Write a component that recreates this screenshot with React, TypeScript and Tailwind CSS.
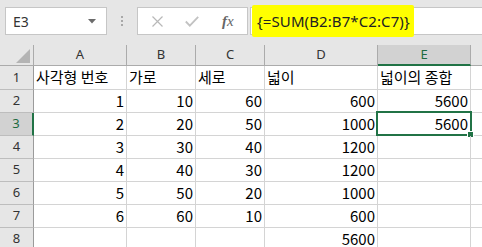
import React from "react";

const colW = ["w-[34px]", "w-[93px]", "w-[69px]", "w-[69px]", "w-[113px]", "w-[93px]"];
const cellFont = { fontFamily: '"Noto Sans CJK KR", "Noto Sans", sans-serif' };
const uiFont = { fontFamily: '"Noto Sans", "Open Sans", sans-serif' };

type Cell = { v: string; left?: boolean };

const data: Cell[][] = [
  [{ v: "사각형 번호", left: true }, { v: "가로", left: true }, { v: "세로", left: true }, { v: "넓이", left: true }, { v: "넓이의 종합", left: true }],
  [{ v: "1" }, { v: "10" }, { v: "60" }, { v: "600" }, { v: "5600" }],
  [{ v: "2" }, { v: "20" }, { v: "50" }, { v: "1000" }, { v: "5600" }],
  [{ v: "3" }, { v: "30" }, { v: "40" }, { v: "1200" }, { v: "" }],
  [{ v: "4" }, { v: "40" }, { v: "30" }, { v: "1200" }, { v: "" }],
  [{ v: "5" }, { v: "50" }, { v: "20" }, { v: "1000" }, { v: "" }],
  [{ v: "6" }, { v: "60" }, { v: "10" }, { v: "600" }, { v: "" }],
  [{ v: "" }, { v: "" }, { v: "" }, { v: "5600" }, { v: "" }],
];

export default function App() {
  return (
    <div className="w-[482px] h-[247px] overflow-hidden bg-white select-none">
      {/* toolbar */}
      <div className="h-[45px] bg-[#e6e6e6] flex items-start pt-[7px]">
        <div className="ml-[5px] w-[102px] h-[28px] bg-white border border-[#c6c6c6] flex items-center justify-between pl-[7px] pr-[10px]">
          <span className="text-[14px] text-[#333]" style={uiFont}>E3</span>
          <svg width="8" height="5" viewBox="0 0 8 5"><path d="M0 0 L8 0 L4 4.5 Z" fill="#6b6b6b" /></svg>
        </div>
        <div className="w-[30px] h-[28px] flex flex-col items-center justify-center gap-[2px]">
          <div className="w-[2px] h-[2px] bg-[#a8a8a8]" />
          <div className="w-[2px] h-[2px] bg-[#a8a8a8]" />
          <div className="w-[2px] h-[2px] bg-[#a8a8a8]" />
        </div>
        <div className="w-[111px] h-[28px] bg-white border border-[#c6c6c6] flex items-center">
          <svg className="ml-[14px]" width="11" height="11" viewBox="0 0 11 11">
            <path d="M0.5 0.5 L10.5 10.5 M10.5 0.5 L0.5 10.5" stroke="#b8b8b8" strokeWidth="1.2" />
          </svg>
          <svg className="ml-[22px]" width="14" height="11" viewBox="0 0 14 11">
            <path d="M0.8 5.5 L4.8 9.6 L13.2 0.8" stroke="#c2c2c2" strokeWidth="1.8" fill="none" />
          </svg>
          <span className="ml-[23px] text-[15px] italic text-[#666] leading-none" style={{ fontFamily: '"Liberation Serif", "DejaVu Serif", serif' }}>
            <span className="font-semibold">f</span>x
          </span>
        </div>
        <div className="ml-[2px] flex-1 h-[28px] bg-white border-y border-l border-[#c6c6c6] relative">
          <div className="absolute left-[1px] top-[-3px] w-[162px] h-[32px] bg-[#ffff00] rounded-[2px] flex items-center pl-[5px]">
            <span className="text-[15px] text-[#222] tracking-[0.1px]" style={uiFont}>{"{=SUM(B2:B7*C2:C7)}"}</span>
          </div>
        </div>
      </div>

      {/* column header */}
      <div className="flex h-[21px] bg-[#e6e6e6]">
        <div className="w-[34px] border-r border-b border-[#ababab] relative">
          <svg className="absolute left-[16px] top-[4px]" width="14" height="14" viewBox="0 0 14 14">
            <path d="M14 0 L14 14 L0 14 Z" fill="#b4b4b4" />
          </svg>
        </div>
        {["A", "B", "C", "D", "E"].map((h, i) => (
          <div
            key={h}
            className={
              colW[i + 1] +
              " flex items-center justify-center text-[13px] border-r " +
              (h === "E"
                ? "bg-[#d2d2d2] border-r-[#ababab] border-b-2 border-b-[#217346] text-[#1e6b41]"
                : "border-r-[#ababab] border-b border-b-[#ababab] text-[#333]")
            }
            style={uiFont}
          >
            {h}
          </div>
        ))}
        <div className="flex-1 border-b border-[#ababab]" />
      </div>

      {/* rows */}
      {data.map((row, r) => {
        const sel = r === 2;
        return (
          <div key={r} className={(r === 0 ? "h-[24px]" : "h-[23px]") + " flex"}>
            <div
              className={
                "w-[34px] flex items-center justify-center text-[13px] border-b border-b-[#bdbdbd] " +
                (sel ? "bg-[#d2d2d2] border-r-2 border-r-[#217346] text-[#1e6b41]" : "bg-[#e6e6e6] border-r border-r-[#9b9b9b] text-[#333]")
              }
              style={uiFont}
            >
              {r + 1}
            </div>
            {row.map((c, ci) => (
              <div
                key={ci}
                className={
                  colW[ci + 1] +
                  " relative flex items-center border-r border-b border-[#d4d4d4] text-[15px] text-black whitespace-nowrap " +
                  (c.left ? "justify-start pl-[2px]" : "justify-end pr-[2px]")
                }
                style={cellFont}
              >
                {c.v}
                {sel && ci === 4 && (
                  <>
                    <div className="absolute left-[-2px] top-[-2px] w-[96px] h-[25px] border-2 border-[#217346]" />
                    <div className="absolute left-[89px] top-[18px] w-[7px] h-[7px] bg-white flex items-center justify-center">
                      <div className="w-[5px] h-[5px] bg-[#217346]" />
                    </div>
                  </>
                )}
              </div>
            ))}
            <div className="flex-1 border-b border-[#d4d4d4]" />
          </div>
        );
      })}
    </div>
  );
}
